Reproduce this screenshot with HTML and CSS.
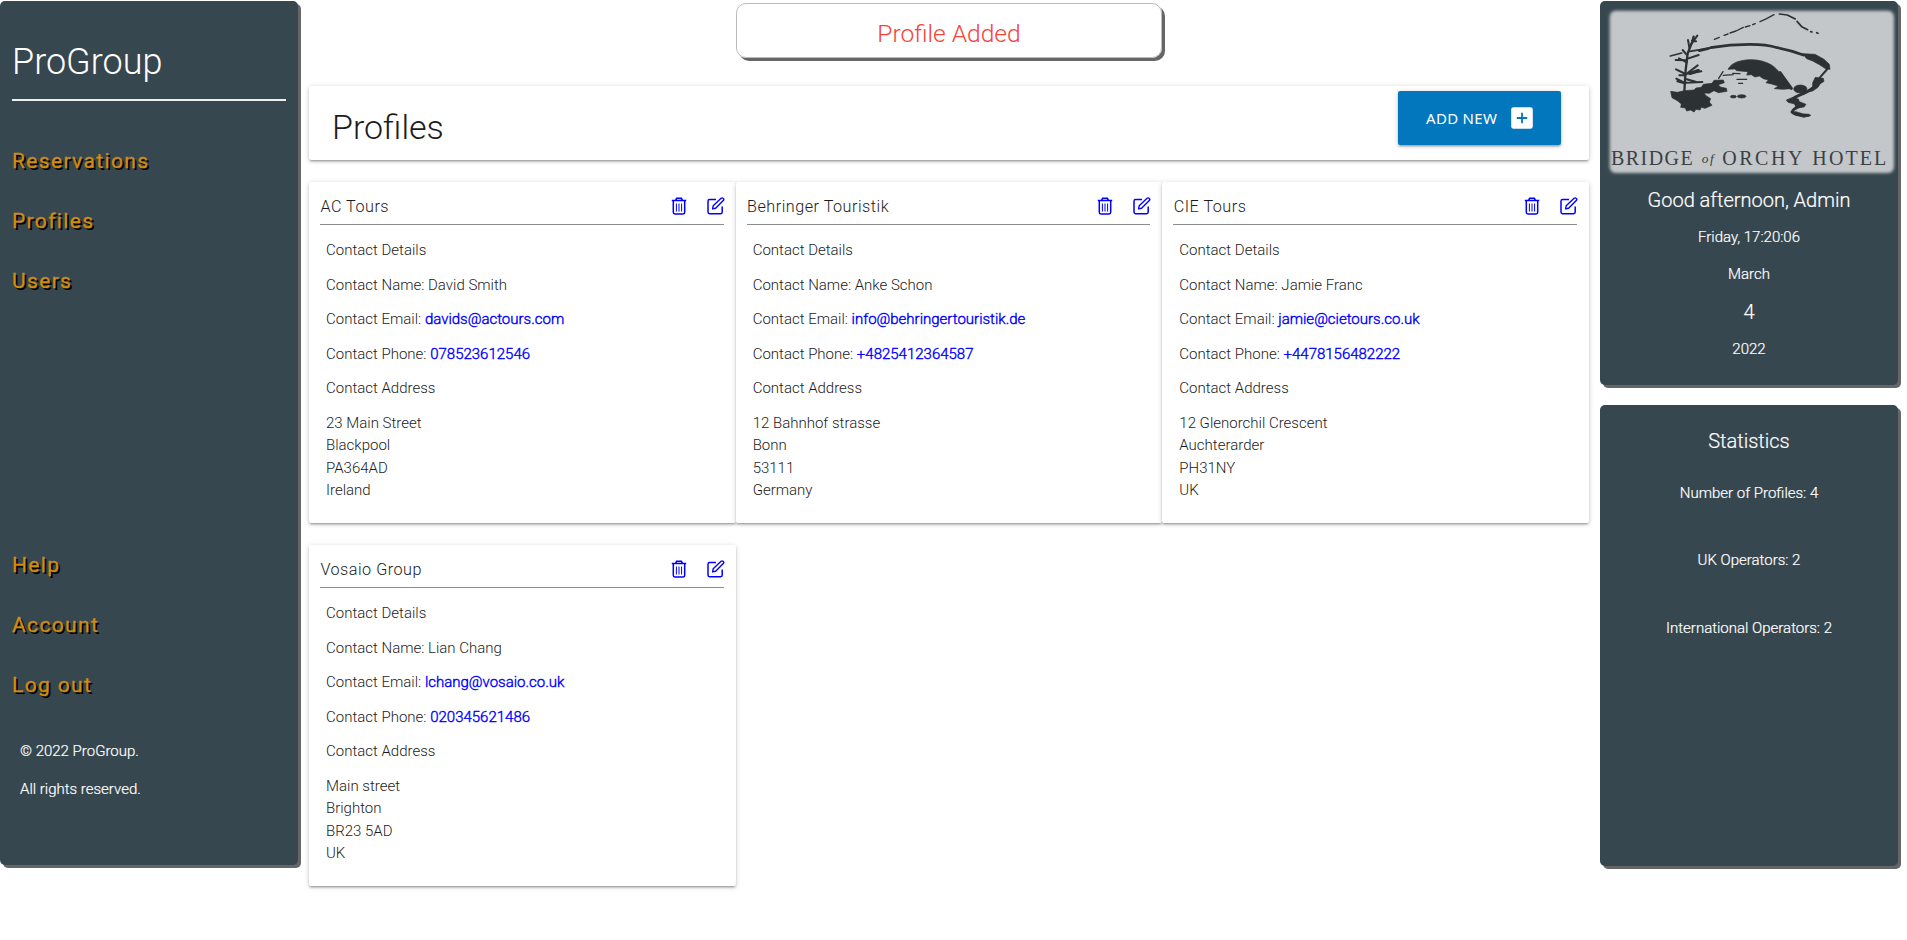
FILE: index.html
```html
<!DOCTYPE html>
<html lang="en">
<head>
<meta charset="utf-8">
<title>ProGroup - Profiles</title>
<link rel="stylesheet" href="styles.css">
</head>
<body>
<svg class="sprite" aria-hidden="true">
  <symbol id="trash" viewBox="0 0 16 18">
    <path d="M.8 3.5h14.4M4.6 3.3l1-2h4.8l1 2M2.3 3.7v11.6q0 1.6 1.6 1.6h8.2q1.6 0 1.6-1.6V3.7" fill="none" stroke="currentColor" stroke-width="1.5"/>
    <path d="M5.4 6.5v8M8 6.5v8M10.6 6.5v8" fill="none" stroke="currentColor" stroke-width="1"/>
  </symbol>
  <symbol id="edit" viewBox="0 0 18 18">
    <path d="M9 2.6H2.6q-1.6 0-1.6 1.6v10.9q0 1.6 1.6 1.6h11q1.6 0 1.6-1.6V9.4" fill="none" stroke="currentColor" stroke-width="1.5"/>
    <path d="M5.6 11.9l.6-3.1 7.9-7.5q1.1-.9 2.2.1 1 1.1 0 2.2l-7.7 7.6z" fill="none" stroke="currentColor" stroke-width="1.4" stroke-linejoin="round"/>
  </symbol>
</svg>
<div class="layout">
  <aside class="sidebar">
    <h1 class="brand">ProGroup</h1>
    <nav class="menu">
      <a>Reservations</a>
      <a>Profiles</a>
      <a>Users</a>
    </nav>
    <nav class="menu menu-lower">
      <a>Help</a>
      <a>Account</a>
      <a>Log out</a>
    </nav>
    <footer class="legal">
      <p>© 2022 ProGroup.</p>
      <p>All rights reserved.</p>
    </footer>
  </aside>

  <main class="content">
    <div class="flash">Profile Added</div>
    <header class="card heading">
      <h2>Profiles</h2>
      <a class="btn">Add new
        <svg class="plus" viewBox="0 0 22 22"><rect x=".2" y=".2" width="21.6" height="21.6" rx="2.4" fill="#fff"/><path d="M11 5.8v10.4M5.8 11h10.4" stroke="#0277bd" stroke-width="1.8"/></svg>
      </a>
    </header>
    <section class="grid">
      <article class="card profile">
        <div class="profile-top"><h3>AC Tours</h3><svg class="trash"><use href="#trash"/></svg><svg class="edit"><use href="#edit"/></svg></div>
        <div class="details">
          <p>Contact Details</p>
          <p>Contact Name: David Smith</p>
          <p>Contact Email: <a>davids@actours.com</a></p>
          <p>Contact Phone: <a>078523612546</a></p>
          <p>Contact Address</p>
          <p>23 Main Street<br>Blackpool<br>PA364AD<br>Ireland</p>
        </div>
      </article>
      <article class="card profile">
        <div class="profile-top"><h3>Behringer Touristik</h3><svg class="trash"><use href="#trash"/></svg><svg class="edit"><use href="#edit"/></svg></div>
        <div class="details">
          <p>Contact Details</p>
          <p>Contact Name: Anke Schon</p>
          <p>Contact Email: <a>info@behringertouristik.de</a></p>
          <p>Contact Phone: <a>+4825412364587</a></p>
          <p>Contact Address</p>
          <p>12 Bahnhof strasse<br>Bonn<br>53111<br>Germany</p>
        </div>
      </article>
      <article class="card profile">
        <div class="profile-top"><h3>CIE Tours</h3><svg class="trash"><use href="#trash"/></svg><svg class="edit"><use href="#edit"/></svg></div>
        <div class="details">
          <p>Contact Details</p>
          <p>Contact Name: Jamie Franc</p>
          <p>Contact Email: <a>jamie@cietours.co.uk</a></p>
          <p>Contact Phone: <a>+4478156482222</a></p>
          <p>Contact Address</p>
          <p>12 Glenorchil Crescent<br>Auchterarder<br>PH31NY<br>UK</p>
        </div>
      </article>
      <article class="card profile">
        <div class="profile-top"><h3>Vosaio Group</h3><svg class="trash"><use href="#trash"/></svg><svg class="edit"><use href="#edit"/></svg></div>
        <div class="details">
          <p>Contact Details</p>
          <p>Contact Name: Lian Chang</p>
          <p>Contact Email: <a>lchang@vosaio.co.uk</a></p>
          <p>Contact Phone: <a>020345621486</a></p>
          <p>Contact Address</p>
          <p>Main street<br>Brighton<br>BR23 5AD<br>UK</p>
        </div>
      </article>
    </section>
  </main>

  <aside class="right">
    <section class="panel welcome">
      <svg class="logo" viewBox="30 3 894 540">
        <defs><filter id="soft" x="-5%" y="-5%" width="110%" height="110%"><feGaussianBlur stdDeviation="4"/></filter></defs>
        <rect x="59" y="32" width="853" height="487" rx="18" fill="#c3c7ca" filter="url(#soft)"/>
        <g fill="none" stroke="#2c3133" stroke-linecap="round" stroke-linejoin="round">
          <path d="M373 118L388 112M402 106L414 102M420 99L438 93L460 82M466 81L480 77M488 74L496 71M510 65L530 56L552 44" stroke-width="4"/>
          <path d="M568 42L592 45L616 57M621 64L635 80L653 89M662 95L666 96M680 98L684 100" stroke-width="5"/>
          <path d="M328 152L356 145M362 143Q420 133 480 133Q530 133 562 143Q600 150 640 165" stroke-width="8"/>
          <path d="M295 155L350 146M241 168L275 159" stroke-width="5"/>
          <path d="M283 275L287 210L293 160L307 125L311 110" stroke-width="7"/>
          <path d="M290 181L257 180M290 187L267 175M293 176L326 165M289 163L278 150M298 143L294 120M304 132L322 107M306 122L318 124M287 222L258 208M286 226L268 226M289 222L323 196M288 222L334 214M284 249L259 236M284 250L262 244M286 248L337 246M290 238L319 246" stroke-width="6"/>
          <path d="M300 220L325 212" stroke-width="10"/>
          <path d="M386 235L399 215M400 226L430 224M428 220L450 221M441 238H470M446 250H458" stroke-width="4"/>
          <path d="M570 218L604 265" stroke-width="9"/>
          <path d="M712 207L690 232" stroke-width="6"/>
          <path d="M672 262Q650 278 632 284Q612 292 605 300Q625 308 638 316Q610 324 606 336Q615 346 655 346" stroke-width="9"/>
        </g>
        <g fill="#2c3133" stroke="#2c3133" stroke-width="2" stroke-linejoin="round">
          <path d="M242 274L262 277L283 272L312 270L318 264L334 262L340 253L366 250L372 241L400 240L403 248L385 254L391 261L409 265L411 274L385 278L372 272L358 280L342 279L348 287L362 296L358 306L366 316L345 325L334 322L330 330L318 328L312 336L302 330L290 333L286 324L272 322L274 312L262 302L246 293Z"/>
          <path d="M414 208C425 186 455 179 485 179C525 180 550 195 564 212L580 230L602 266L580 268L553 266L565 258L545 252L528 248L535 240L520 236L508 228L495 231L484 224L470 225L474 215L440 212L434 207Z"/>
          <path d="M638 161L675 163L702 178L718 193L720 208L708 207L690 195L668 183L650 176Z"/>
          <path d="M676 232L700 235L702 244L690 252L684 262L668 273L652 276L668 262L668 248Z"/>
          <path d="M589 300L606 293L625 297L628 305L648 313L642 321L618 324L614 312L594 307Z"/>
          <path d="M608 336L618 335L640 342L663 346L642 352L614 345Z"/>
          <ellipse cx="631" cy="267" rx="20" ry="12"/><ellipse cx="430" cy="290" rx="9" ry="4"/><ellipse cx="455" cy="289" rx="13" ry="5"/>
        </g>
        <g class="wordmark">
          <text x="63" y="495" textLength="245">BRIDGE</text>
          <text class="of" x="335" y="489" textLength="36">of</text>
          <text x="397" y="495" textLength="240">ORCHY</text>
          <text x="667" y="495" textLength="222">HOTEL</text>
        </g>
      </svg>
      <h4>Good afternoon, Admin</h4>
      <p>Friday, 17:20:06</p>
      <p>March</p>
      <p class="day">4</p>
      <p>2022</p>
    </section>
    <section class="panel stats">
      <h4>Statistics</h4>
      <p>Number of Profiles: 4</p>
      <p>UK Operators: 2</p>
      <p>International Operators: 2</p>
    </section>
  </aside>
</div>
</body>
</html>
```
FILE: styles.css
```css
* { box-sizing: border-box; }
body {
  margin: 0;
  min-height: 940px;
  background: #fff;
  color: #1c1c1c;
  font: 300 15px/22.5px Roboto, sans-serif;
}
h1, h2, h3, h4, p { margin: 0; font-weight: 300; }
.sprite { display: none; }

.layout {
  display: grid;
  grid-template-columns: 298px 1280px 298px;
  column-gap: 11px;
  align-items: start;
  min-height: 940px;
}

.sidebar, .panel {
  background: #37474f;
  color: #fff;
  border-radius: 5px;
  box-shadow: 3px 3px #666;
}
.sidebar { height: 864px; margin-top: 1px; padding: 34px 12px 0; }
.brand {
  height: 66px;
  border-bottom: 2px solid #eee;
  font-size: 36px;
  line-height: 54px;
}
.menu { display: flex; flex-direction: column; padding-top: 30px; }
.menu a {
  height: 60px;
  font-size: 21px;
  font-weight: 400;
  line-height: 60px;
  letter-spacing: 1.35px;
  color: #d18d0c;
  -webkit-text-stroke: .3px #d18d0c;
  text-shadow: 2px 2px #000;
}
.menu-lower { padding-top: 224px; }
.legal { padding: 25px 8px 0; -webkit-text-stroke: .2px #fff; }
.legal p { margin-bottom: 15px; }

.card {
  background: #fff;
  border-radius: 2px;
  box-shadow: 0 2px 2px 0 rgba(0,0,0,.14), 0 3px 1px -2px rgba(0,0,0,.12), 0 1px 5px 0 rgba(0,0,0,.2);
}
.flash {
  width: 426px;
  height: 55px;
  margin: 3px auto 28px;
  border: 1px solid #bbb;
  border-radius: 10px;
  box-shadow: 3px 3px #666;
  color: #f44336;
  font-size: 24.6px;
  line-height: 60px;
  text-align: center;
}
.heading {
  display: flex;
  justify-content: space-between;
  height: 74px;
  padding: 5px 28px 0 23px;
}
.heading h2 { font-size: 34px; line-height: 72px; }
.btn {
  display: flex;
  align-items: center;
  gap: 14px;
  width: 163px;
  height: 54px;
  padding-left: 28px;
  border-radius: 2px;
  background: #0277bd;
  box-shadow: 0 2px 2px 0 rgba(0,0,0,.14), 0 3px 1px -2px rgba(0,0,0,.12), 0 1px 5px 0 rgba(0,0,0,.2);
  color: #fff;
  font: 400 15px "Noto Sans", sans-serif;
  letter-spacing: .3px;
  text-transform: uppercase;
}
.plus { width: 22px; height: 22px; }
.grid { display: grid; grid-template-columns: repeat(3, 1fr); row-gap: 22px; margin-top: 22px; }
.profile { height: 341px; padding: 11px 12px 0 11px; }
.profile-top {
  display: flex;
  align-items: center;
  height: 32px;
  border-bottom: 1px solid #8c8c8c;
}
.profile-top h3 { flex: 1; font-size: 16.2px; line-height: 24px; letter-spacing: .5px; padding: 0 0 4px .4px; }
.profile-top svg { color: #00f; margin-bottom: 5px; overflow: visible; }
.trash { width: 16px; height: 18px; margin-right: 20px; }
.edit { width: 18px; height: 18px; margin-right: -1px; }
.details { padding: 14px 6px 0 6px; }
.details p { margin-bottom: 12px; }
.details a { color: #00f; -webkit-text-stroke: .4px #00f; }

.right { display: grid; row-gap: 20px; padding-top: 1px; }
.panel { text-align: center; -webkit-text-stroke: .2px #fff; }
.welcome { height: 384px; }
.logo { display: block; width: 298px; height: 180px; -webkit-text-stroke: 0; }
.wordmark { fill: #3b4043; font: 60px "Liberation Serif", serif; }
.of { font-size: 40px; font-style: italic; }
.panel h4 { font-size: 20px; line-height: 30px; }
.welcome h4 { padding-top: 4px; margin-bottom: 11px; }
.welcome p { margin-bottom: 14.7px; }
.welcome .day { font-size: 20px; padding-top: 1px; margin-bottom: 14px; }
.stats { height: 461px; padding-top: 21px; }
.stats p { padding-top: 26px; margin-bottom: 18.8px; }
```
